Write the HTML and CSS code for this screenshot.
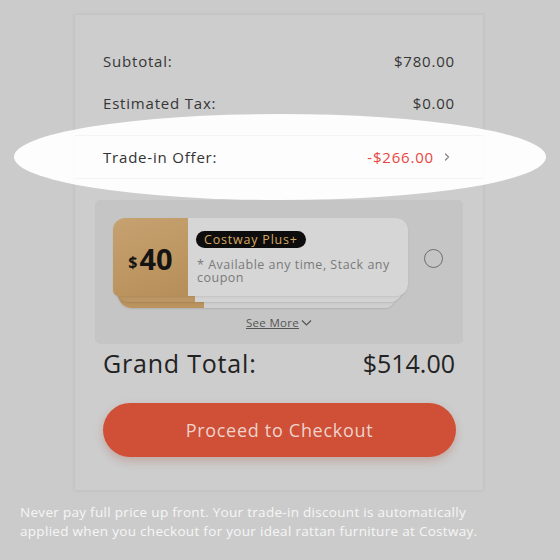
FILE: index.html
```html
<!DOCTYPE html>
<html>
<head>
<meta charset="utf-8">
<link rel="stylesheet" href="styles.css">
</head>
<body>
<div class="page">
  <div class="card">
    <div class="row first"><span>Subtotal:</span><span>$780.00</span></div>
    <div class="row"><span>Estimated Tax:</span><span>$0.00</span></div>
    <div class="row trade">
      <span>Trade-in Offer:</span>
      <span class="neg">-$266.00<svg class="chev" width="8" height="10" viewBox="0 0 8 10"><path d="M2.5 2 L5.5 5 L2.5 8" fill="none" stroke="#8a8a8a" stroke-width="1.4" stroke-linecap="round" stroke-linejoin="round"/></svg></span>
    </div>
    <div class="coupons">
      <div class="coupon-line">
        <div class="coupon">
          <div class="layer l2"></div>
          <div class="layer l1"></div>
          <div class="face">
            <div class="amount"><span class="cur">$</span>40</div>
            <div class="info">
              <span class="badge">Costway Plus+</span>
              <p class="desc">* Available any time, Stack any coupon</p>
            </div>
          </div>
        </div>
        <span class="radio"></span>
      </div>
      <div class="see-more"><span class="link">See More</span><svg width="11" height="8" viewBox="0 0 11 8"><path d="M1 1.5 L5.5 6 L10 1.5" fill="none" stroke="#555" stroke-width="1.2"/></svg></div>
    </div>
    <div class="grand"><span class="glabel">Grand Total:</span><span>$514.00</span></div>
    <button class="checkout">Proceed to Checkout</button>
  </div>
  <p class="caption">Never pay full price up front. Your trade-in discount is automatically applied when you checkout for your ideal rattan furniture at Costway.</p>
  <div class="spotlight"></div>
</div>
</body>
</html>
```
FILE: styles.css
```css
html, body {
  margin: 0;
  padding: 0;
  background: #cbcbcb;
}
body {
  font-family: "Open Sans", "Liberation Sans", sans-serif;
  color: #353535;
}
.page {
  position: relative;
  width: 560px;
  height: 560px;
  overflow: hidden;
}
.card {
  margin: 15px 0 0 75px;
  width: 408px;
  height: 475px;
  box-sizing: border-box;
  padding: 25px 28px 0 28px;
  background: #cdcdcd;
  box-shadow: 0 0 3px 1px rgba(0,0,0,0.06);
  display: flex;
  flex-direction: column;
}
.row {
  height: 42px;
  display: flex;
  justify-content: space-between;
  align-items: center;
  font-size: 15px;
  letter-spacing: 0.8px;
  color: #363636;
}
.row.trade {
  position: relative;
  z-index: 2;
  margin-top: 11px;
  height: 42px;
  border-top: 1px solid rgba(0,0,0,0.035);
  border-bottom: 1px solid rgba(0,0,0,0.035);
  margin-left: -28px;
  margin-right: -28px;
  padding: 0 28px;
  color: #333;
}
.neg {
  color: #e8463d;
  display: flex;
  align-items: center;
  gap: 9px;
  margin-right: 4px;
}
.coupons {
  margin: 21px -8px 0 -8px;
  height: 144px;
  box-sizing: border-box;
  background: #c5c5c5;
  border-radius: 5px;
  padding: 18px 0 0 18px;
}
.coupon-line {
  display: flex;
  align-items: flex-start;
}
.coupon {
  position: relative;
  width: 295px;
  height: 90px;
}
.face {
  position: relative;
  z-index: 3;
  display: flex;
  height: 78px;
  border-radius: 12px 12px 12px 6px;
  overflow: hidden;
  box-shadow: 0 1px 2px rgba(0,0,0,0.08);
}
.layer {
  position: absolute;
  height: 78px;
  border-radius: 12px 12px 12px 14px;
  background: linear-gradient(to right, #bc9662 0, #bc9662 80px, #d3d3d3 80px);
  box-shadow: 0 1px 2px rgba(0,0,0,0.1);
}
.l1 { z-index: 2; top: 6px; left: 2px; right: 6px; }
.l2 { z-index: 1; top: 12px; left: 5px; right: 12px; background: linear-gradient(to right, #ba935f 0, #ba935f 86px, #cfcfcf 86px); }
.amount {
  width: 75px;
  flex: none;
  background: linear-gradient(160deg, #c6a271 0%, #bd9661 60%, #b68e5a 100%);
  display: flex;
  align-items: center;
  justify-content: center;
  font-weight: 700;
  font-size: 29px;
  color: #141414;
  letter-spacing: 0;
  padding-top: 2px;
  box-sizing: border-box;
}
.cur {
  font-size: 16px;
  margin-right: 2px;
  margin-top: 8px;
}
.info {
  flex: 1;
  background: #d6d6d6;
  padding: 9px 8px 0 8px;
  border-radius: 0 12px 12px 0;
}
.badge {
  display: inline-block;
  background: #0d0d0d;
  color: #d7a862;
  font-size: 12.5px;
  letter-spacing: 0.8px;
  line-height: 17px;
  padding: 0 8px;
  border-radius: 9px;
}
.desc {
  margin: 9px 0 0 1px;
  font-size: 12.5px;
  letter-spacing: 0.5px;
  line-height: 13px;
  color: #7a7a7a;
}
.radio {
  margin: 31px 0 0 16px;
  width: 17px;
  height: 17px;
  border: 1.5px solid #6e6e6e;
  border-radius: 50%;
  flex: none;
}
.see-more {
  margin: 7px 0 0 -18px;
  display: flex;
  justify-content: center;
  align-items: center;
  gap: 2px;
  font-size: 11.5px;
  letter-spacing: 0.3px;
  color: #555;
}
.see-more .link {
  text-decoration: underline;
}
.grand {
  margin-top: 4px;
  height: 30px;
  display: flex;
  justify-content: space-between;
  align-items: center;
  font-size: 25px;
  color: #222;
}
.glabel {
  letter-spacing: 0.8px;
}
.checkout {
  margin-top: 25px;
  height: 54px;
  width: 353px;
  border: none;
  border-radius: 27px;
  background: #d04f37;
  color: #ecd3cb;
  font-family: inherit;
  font-size: 18px;
  letter-spacing: 0.7px;
  box-shadow: 0 4px 8px rgba(160,60,40,0.25);
}
.caption {
  margin: 13px 0 0 20px;
  width: 490px;
  font-size: 13.5px;
  letter-spacing: 0.3px;
  line-height: 19px;
  color: #f6f6f6;
}
.spotlight {
  position: absolute;
  z-index: 1;
  left: 14px;
  top: 114px;
  width: 532px;
  height: 86px;
  border-radius: 50%;
  background: rgba(255,255,255,0.95);
}
```
